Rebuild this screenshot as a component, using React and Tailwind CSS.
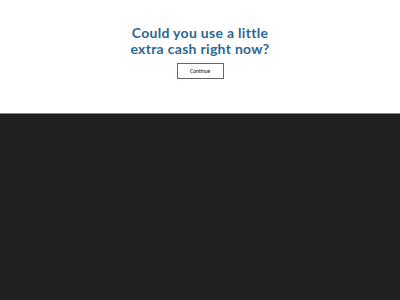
import React from "react";

const App = () => {
  return (
    <div className="w-[400px] h-[300px] flex flex-col bg-[#222222]" style={{ fontFamily: "Lato, 'Liberation Sans', sans-serif" }}>
      {/* top prompt */}
      <div className="h-[114px] bg-white border-b border-[#8a8a8a] flex flex-col items-center pt-[25px]">
        <h1 className="text-[14px] leading-[16px] font-bold text-[#2d6690] text-center tracking-[0.3px]">
          Could you use a little
          <br />
          extra cash right now?
        </h1>
        <button className="mt-[6px] w-[47px] h-[16px] border border-[#666666] text-[5px] leading-none font-medium text-[#222222] bg-white">
          Continue
        </button>
      </div>

      {/* dark area */}
      <div className="flex-1 bg-[#202020]"></div>
    </div>
  );
};

export default App;
